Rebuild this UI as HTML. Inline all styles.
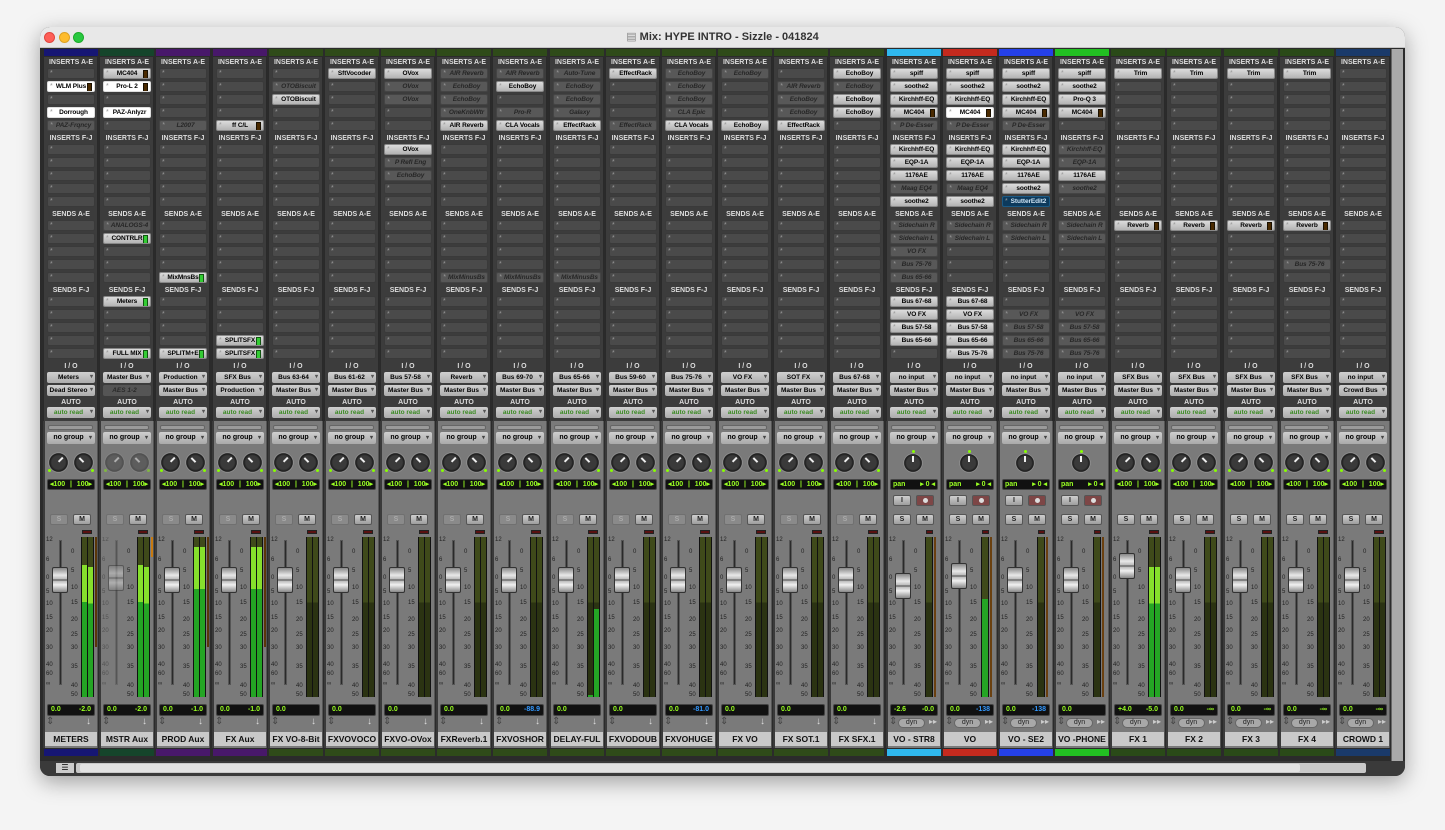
<!DOCTYPE html>
<html><head><meta charset="utf-8"><style>
*{box-sizing:border-box}
body{margin:0;width:1445px;height:830px;background:#f4f4f4;position:relative;overflow:hidden;font-family:"Liberation Sans",sans-serif}
.win{position:absolute;left:40px;top:27px;width:1365px;height:749px;border-radius:10px;background:#2b2b2b;box-shadow:0 6px 22px rgba(0,0,0,.35);overflow:hidden}
.tb{position:absolute;left:0;top:0;width:1365px;height:21px;background:#e8e8e8;border-bottom:1px solid #c4c4c4;text-align:center;font-size:11px;line-height:21px;color:#333;font-weight:bold}
.dot{position:absolute;top:5px;width:11px;height:11px;border-radius:50%}
.vs{position:absolute;left:1351px;top:22px;width:12px;height:712px;background:#a9a9a9;border-left:1px solid #666}
.hsb{position:absolute;left:0;top:734px;width:1365px;height:15px;background:#3a3a3a}
.hsb .t{position:absolute;left:36px;top:2px;width:1290px;height:10px;background:#c9c9c9;border-radius:2px}
.hsb .th{position:absolute;left:40px;top:3px;width:1220px;height:8px;background:#e2e2e2;border-radius:2px}
.s{position:absolute;top:0;width:55px;height:830px}
.up{position:absolute;left:0;top:57px;width:55px;height:364px;background:#3c3c3c;border-left:1px solid #2a2a2a;border-right:1px solid #2a2a2a}
.lo{position:absolute;left:0;top:421px;width:55px;height:327px;background:#7a7a7a;border-left:2px solid #3a3a3a;border-right:1px solid #555}
.cb{position:absolute;left:1px;top:49px;width:54px;height:7px}
.cb2{position:absolute;left:1px;top:749px;width:54px;height:7px}
.sec{position:absolute;left:4px;width:48px}
.h{height:11px;font-size:7px;font-weight:bold;color:#ddd;text-align:center;line-height:11px;white-space:nowrap;overflow:hidden}
.sec p{margin:0 0 2px 0;height:11px;background:#4a4a4a;border:1px solid #3a3a3a;border-radius:2px;position:relative;font-size:6.5px;font-weight:bold;line-height:9px;text-align:center;color:#000;padding-left:5px;white-space:nowrap;overflow:hidden;letter-spacing:-0.1px}
.sec p:before{content:"*";position:absolute;left:2px;top:0;color:#999;font-size:7px;font-weight:normal}
.sec p.a{background:linear-gradient(#dcdcdc,#b4b4b4);border-color:#888}
.sec p.i{background:#585858;color:#262626;font-style:italic;border-color:#444}
.sec p.w{background:#fff;border-color:#ddd}
.sec p.b{background:#0d3a5c;color:#cfe4f4;border-color:#1b5a85}
.sec p.m,.sec p.g{padding-right:5px}
.sec p.m:after{content:"";position:absolute;right:2px;top:1px;width:3px;height:7px;background:#4a2a00;border:1px solid #1a1000}
.sec p.g:after{content:"";position:absolute;right:2px;top:1px;width:3px;height:7px;background:#3c3;border:1px solid #151}
.io{position:absolute;left:4px;width:48px;height:11px;background:linear-gradient(#d0d0d0,#acacac);border-radius:2px;font-size:6.5px;font-weight:bold;text-align:center;line-height:11px;padding-right:5px;white-space:nowrap;overflow:hidden}
.io:after{content:"▾";position:absolute;right:2px;top:0;font-size:6px;color:#555}
.io.d{background:#555;color:#2a2a2a;font-style:italic}
.ar{color:#3a8a22}
.gb{position:absolute;left:5px;top:425px;width:45px;height:5px;background:#9a9a9a;border:1px solid #666;border-radius:2px}
.ng{position:absolute;left:4px;top:432px;width:48px;height:12px;background:linear-gradient(#cfcfcf,#a9a9a9);border-radius:2px;font-size:7px;font-weight:bold;text-align:center;line-height:12px;padding-right:5px}
.ng:after{content:"▾";position:absolute;right:3px;font-size:6px;color:#444}
.kn{position:absolute;top:452px;width:21px;height:21px;border-radius:50%;background:radial-gradient(#3a3a3a 45%,#1a1a1a 60%,#999 66%,#444 78%);}
.kn:after{content:"";position:absolute;left:10px;top:5px;width:1.5px;height:6px;background:#eee;transform-origin:50% 100%}
.kl{left:5px}.kl:after{transform:rotate(-135deg) translateY(0px);top:10px;height:6px;transform-origin:50% 0}
.kr{left:30px}.kr:after{transform:rotate(135deg);top:10px;transform-origin:50% 0}
.kl:before,.kr:before{content:"";position:absolute;top:17px;width:3px;height:3px;background:#8f0;border-radius:50%}
.kl:before{left:0}.kr:before{right:0}
.dim{opacity:.45}
.km{left:17px;top:453px;width:20px;height:20px}
.km:after{transform:none;top:3px;left:9px}
.km:before{content:"";position:absolute;left:8.5px;top:-3px;width:3px;height:3px;background:#8f0;border-radius:50%}
.pv{position:absolute;left:4px;top:479px;width:48px;height:11px;background:#111;border:1px solid #444;border-radius:2px;color:#9f2;font-size:7px;font-weight:bold;line-height:9px;display:flex;justify-content:space-between;padding:0 2px}
.bt{position:absolute;width:18px;height:11px;background:linear-gradient(#cfcfcf,#9e9e9e);border:1px solid #555;border-radius:2px;font-size:7px;font-weight:bold;text-align:center;line-height:9px;color:#222}
.S{left:7px;top:514px}.M{left:30px;top:514px}
.bs{background:#8a8a8a;color:#aaa;border-color:#707070}
.I{left:7px;top:495px}.R{left:30px;top:495px;background:#7d4646}
.R:after{content:"";position:absolute;left:6px;top:2px;width:5px;height:5px;border-radius:50%;background:#ddd}
.sl,.sr{position:absolute;top:0;font-size:6px;color:#222}
.sl{left:3px}.sr{left:28px}
.sl i,.sr i{position:absolute;font-style:normal;line-height:6px}
.sl i:nth-child(1){top:537px}.sl i:nth-child(2){top:557px}.sl i:nth-child(3){top:575px}.sl i:nth-child(4){top:589px}.sl i:nth-child(5){top:601px}.sl i:nth-child(6){top:615px}.sl i:nth-child(7){top:628px}.sl i:nth-child(8){top:645px}.sl i:nth-child(9){top:662px}.sl i:nth-child(10){top:671px}.sl i:nth-child(11){top:681px}
.sr i:nth-child(1){top:545px}.sr i:nth-child(2){top:549px}.sr i:nth-child(3){top:568px}.sr i:nth-child(4){top:585px}.sr i:nth-child(5){top:600px}.sr i:nth-child(6){top:617px}.sr i:nth-child(7){top:632px}.sr i:nth-child(8){top:645px}.sr i:nth-child(9){top:664px}.sr i:nth-child(10){top:683px}.sr i:nth-child(11){top:692px}
.sr i:nth-child(1){display:none}
.tr{position:absolute;left:16px;top:540px;width:3px;height:145px;background:#2a2a2a;border:1px solid #555}
.cap{position:absolute;left:9px;width:16px;height:26px;border-radius:2px;background:linear-gradient(#888,#e8e8e8 30%,#bbb 46%,#444 50%,#bbb 54%,#f0f0f0 70%,#888);border:1px solid #333}
.mt{position:absolute;left:38px;top:537px;width:13px;height:160px;background:#111;display:flex;gap:1px;padding:0 1px}
.mt.mo{left:39px;width:8px}
.mt b{flex:1;position:relative;background:linear-gradient(#3f4a1a 0,#3f4a1a 41%,#2b3312 41%)}
.mt b i{position:absolute;left:0;right:0;bottom:0;background:linear-gradient(#86e02c 0,#86e02c 28%,#24a524 28%)}
.mt b i.dk{background:#24a524}
.pk{position:absolute;left:52px;top:537px;width:2px;height:110px;background:#5a3608}
.cl{position:absolute;left:39px;top:530px;width:10px;height:4px;background:#5a1111;border:1px solid #222}
.vd{position:absolute;left:4px;top:704px;width:48px;height:12px;background:#111;border:1px solid #444;border-radius:2px;color:#9f2;font-size:7px;font-weight:bold;line-height:10px;display:flex;justify-content:space-between;padding:0 3px}
.vd .bl{color:#39f}
.ic{position:absolute;left:3px;top:716px;font-size:10px;color:#444}
.dn{position:absolute;left:43px;top:716px;font-size:10px;color:#ddd}
.dy{position:absolute;left:12px;top:718px;width:27px;height:10px;background:#a8a8a8;border:1px solid #666;border-radius:5px;font-size:7px;text-align:center;line-height:8px;color:#222}
.ff{position:absolute;left:43px;top:717px;font-size:8px;color:#ccc}
.nm{position:absolute;left:2px;top:732px;width:52px;height:14px;background:#c9c9c9;font-size:8.5px;font-weight:bold;text-align:center;line-height:14px;white-space:nowrap;overflow:hidden;color:#111}
</style></head><body>
<div class="win">
<div class="tb"><span style="color:#888;font-weight:normal">&#9636; </span>Mix: HYPE INTRO - Sizzle - 041824</div>
<div class="dot" style="left:4px;background:#fe5f57;border:1px solid #e0443e"></div>
<div class="dot" style="left:19px;background:#febc2e;border:1px solid #dea123"></div>
<div class="dot" style="left:33px;background:#28c840;border:1px solid #1aab29"></div>
<div class="vs"></div>
<div class="hsb"><div class="t"></div><div class="th"></div><div style="position:absolute;left:16px;top:2px;width:18px;height:10px;background:#ccc;font-size:8px;line-height:10px;text-align:center">&#9776;</div></div>
</div>

<!-- 0 METERS -->
<div class="s" style="left:43px"><div class="up"></div><div class="cb" style="background:#161674"></div>
<div class="sec" style="top:57px"><div class="h">INSERTS A-E</div><p></p><p class="w m">WLM Plus</p><p></p><p class="w">Dorrough</p><p class="i">PAZ-Frqncy</p></div>
<div class="sec" style="top:133px"><div class="h">INSERTS F-J</div><p></p><p></p><p></p><p></p><p></p></div>
<div class="sec" style="top:209px"><div class="h">SENDS A-E</div><p></p><p></p><p></p><p></p><p></p></div>
<div class="sec" style="top:285px"><div class="h">SENDS F-J</div><p></p><p></p><p></p><p></p><p></p></div>
<div class="sec" style="top:361px"><div class="h">I / O</div></div><div class="io" style="top:372px">Meters</div><div class="io" style="top:385px">Dead Stereo</div>
<div class="sec" style="top:397px"><div class="h">AUTO</div></div><div class="io ar" style="top:407px">auto read</div>
<div class="lo"></div><div class="gb"></div><div class="ng">no group</div><div class="kn kl"></div><div class="kn kr"></div>
<div class="pv"><span>◂100</span><span>|</span><span>100▸</span></div><div class="bt S bs">S</div><div class="bt M">M</div>
<div class="sl"><i>12</i><i>6</i><i>0</i><i>5</i><i>10</i><i>15</i><i>20</i><i>30</i><i>40</i><i>60</i><i>∞</i></div><div class="sr"><i>0</i><i>0</i><i>5</i><i>10</i><i>15</i><i>20</i><i>25</i><i>30</i><i>35</i><i>40</i><i>50</i></div>
<div class="tr"></div><div class="cap" style="top:567px"></div><div class="cl"></div><div class="mt"><b><i style="height:132px"></i></b><b><i style="height:130px"></i></b></div><div class="pk"></div>
<div class="vd"><span>0.0</span><span>-2.0</span></div><div class="ic">⇕</div><div class="dn">↓</div><div class="nm">METERS</div><div class="cb2" style="background:#161674"></div></div>

<!-- 1 MSTR Aux -->
<div class="s" style="left:99px"><div class="up"></div><div class="cb" style="background:#15452b"></div>
<div class="sec" style="top:57px"><div class="h">INSERTS A-E</div><p class="a m">MC404</p><p class="w m">Pro-L 2</p><p></p><p class="w">PAZ-Anlyzr</p><p></p></div>
<div class="sec" style="top:133px"><div class="h">INSERTS F-J</div><p></p><p></p><p></p><p></p><p></p></div>
<div class="sec" style="top:209px"><div class="h">SENDS A-E</div><p class="i">ANALOGS-4</p><p class="a g">CONTRLR</p><p></p><p></p><p></p></div>
<div class="sec" style="top:285px"><div class="h">SENDS F-J</div><p class="a g">Meters</p><p></p><p></p><p></p><p class="a g">FULL MIX</p></div>
<div class="sec" style="top:361px"><div class="h">I / O</div></div><div class="io" style="top:372px">Master Bus</div><div class="io d" style="top:385px">AES 1-2</div>
<div class="sec" style="top:397px"><div class="h">AUTO</div></div><div class="io ar" style="top:407px">auto read</div>
<div class="lo"></div><div class="gb"></div><div class="ng">no group</div><div class="kn kl dim"></div><div class="kn kr dim"></div>
<div class="pv"><span>◂100</span><span>|</span><span>100▸</span></div><div class="bt S bs">S</div><div class="bt M">M</div>
<div class="sl dim"><i>12</i><i>6</i><i>0</i><i>5</i><i>10</i><i>15</i><i>20</i><i>30</i><i>40</i><i>60</i><i>∞</i></div><div class="sr"><i>0</i><i>0</i><i>5</i><i>10</i><i>15</i><i>20</i><i>25</i><i>30</i><i>35</i><i>40</i><i>50</i></div>
<div class="tr dim"></div><div class="cap dim" style="top:565px"></div><div class="cl"></div><div class="mt"><b><i style="height:132px"></i></b><b><i style="height:130px"></i></b></div><div class="pk" style="background:#c77a10;height:20px"></div>
<div class="vd"><span>0.0</span><span>-2.0</span></div><div class="ic">⇕</div><div class="dn">↓</div><div class="nm">MSTR Aux</div><div class="cb2" style="background:#15452b"></div></div>

<!-- 2 PROD Aux -->
<div class="s" style="left:155px"><div class="up"></div><div class="cb" style="background:#48186a"></div>
<div class="sec" style="top:57px"><div class="h">INSERTS A-E</div><p></p><p></p><p></p><p></p><p class="i">L2007</p></div>
<div class="sec" style="top:133px"><div class="h">INSERTS F-J</div><p></p><p></p><p></p><p></p><p></p></div>
<div class="sec" style="top:209px"><div class="h">SENDS A-E</div><p></p><p></p><p></p><p></p><p class="a g">MixMnsBs</p></div>
<div class="sec" style="top:285px"><div class="h">SENDS F-J</div><p></p><p></p><p></p><p></p><p class="a g">SPLITM+E</p></div>
<div class="sec" style="top:361px"><div class="h">I / O</div></div><div class="io" style="top:372px">Production</div><div class="io" style="top:385px">Master Bus</div>
<div class="sec" style="top:397px"><div class="h">AUTO</div></div><div class="io ar" style="top:407px">auto read</div>
<div class="lo"></div><div class="gb"></div><div class="ng">no group</div><div class="kn kl"></div><div class="kn kr"></div>
<div class="pv"><span>◂100</span><span>|</span><span>100▸</span></div><div class="bt S bs">S</div><div class="bt M">M</div>
<div class="sl"><i>12</i><i>6</i><i>0</i><i>5</i><i>10</i><i>15</i><i>20</i><i>30</i><i>40</i><i>60</i><i>∞</i></div><div class="sr"><i>0</i><i>0</i><i>5</i><i>10</i><i>15</i><i>20</i><i>25</i><i>30</i><i>35</i><i>40</i><i>50</i></div>
<div class="tr"></div><div class="cap" style="top:567px"></div><div class="cl"></div><div class="mt"><b><i style="height:150px"></i></b><b><i style="height:150px"></i></b></div><div class="pk"></div>
<div class="vd"><span>0.0</span><span>-1.0</span></div><div class="ic">⇕</div><div class="dn">↓</div><div class="nm">PROD Aux</div><div class="cb2" style="background:#48186a"></div></div>

<!-- 3 FX Aux -->
<div class="s" style="left:212px"><div class="up"></div><div class="cb" style="background:#48186a"></div>
<div class="sec" style="top:57px"><div class="h">INSERTS A-E</div><p></p><p></p><p></p><p></p><p class="a m">ff C/L</p></div>
<div class="sec" style="top:133px"><div class="h">INSERTS F-J</div><p></p><p></p><p></p><p></p><p></p></div>
<div class="sec" style="top:209px"><div class="h">SENDS A-E</div><p></p><p></p><p></p><p></p><p></p></div>
<div class="sec" style="top:285px"><div class="h">SENDS F-J</div><p></p><p></p><p></p><p class="a g">SPLITSFX</p><p class="a g">SPLITSFX</p></div>
<div class="sec" style="top:361px"><div class="h">I / O</div></div><div class="io" style="top:372px">SFX Bus</div><div class="io" style="top:385px">Production</div>
<div class="sec" style="top:397px"><div class="h">AUTO</div></div><div class="io ar" style="top:407px">auto read</div>
<div class="lo"></div><div class="gb"></div><div class="ng">no group</div><div class="kn kl"></div><div class="kn kr"></div>
<div class="pv"><span>◂100</span><span>|</span><span>100▸</span></div><div class="bt S bs">S</div><div class="bt M">M</div>
<div class="sl"><i>12</i><i>6</i><i>0</i><i>5</i><i>10</i><i>15</i><i>20</i><i>30</i><i>40</i><i>60</i><i>∞</i></div><div class="sr"><i>0</i><i>0</i><i>5</i><i>10</i><i>15</i><i>20</i><i>25</i><i>30</i><i>35</i><i>40</i><i>50</i></div>
<div class="tr"></div><div class="cap" style="top:567px"></div><div class="cl"></div><div class="mt"><b><i style="height:150px"></i></b><b><i style="height:150px"></i></b></div><div class="pk"></div>
<div class="vd"><span>0.0</span><span>-1.0</span></div><div class="ic">⇕</div><div class="dn">↓</div><div class="nm">FX Aux</div><div class="cb2" style="background:#48186a"></div></div>

<!-- 4 FX VO-8-Bit -->
<div class="s" style="left:268px"><div class="up"></div><div class="cb" style="background:#2f4b19"></div>
<div class="sec" style="top:57px"><div class="h">INSERTS A-E</div><p></p><p class="i">OTOBiscuit</p><p class="a">OTOBiscuit</p><p></p><p></p></div>
<div class="sec" style="top:133px"><div class="h">INSERTS F-J</div><p></p><p></p><p></p><p></p><p></p></div>
<div class="sec" style="top:209px"><div class="h">SENDS A-E</div><p></p><p></p><p></p><p></p><p></p></div>
<div class="sec" style="top:285px"><div class="h">SENDS F-J</div><p></p><p></p><p></p><p></p><p></p></div>
<div class="sec" style="top:361px"><div class="h">I / O</div></div><div class="io" style="top:372px">Bus 63-64</div><div class="io" style="top:385px">Master Bus</div>
<div class="sec" style="top:397px"><div class="h">AUTO</div></div><div class="io ar" style="top:407px">auto read</div>
<div class="lo"></div><div class="gb"></div><div class="ng">no group</div><div class="kn kl"></div><div class="kn kr"></div>
<div class="pv"><span>◂100</span><span>|</span><span>100▸</span></div><div class="bt S bs">S</div><div class="bt M">M</div>
<div class="sl"><i>12</i><i>6</i><i>0</i><i>5</i><i>10</i><i>15</i><i>20</i><i>30</i><i>40</i><i>60</i><i>∞</i></div><div class="sr"><i>0</i><i>0</i><i>5</i><i>10</i><i>15</i><i>20</i><i>25</i><i>30</i><i>35</i><i>40</i><i>50</i></div>
<div class="tr"></div><div class="cap" style="top:567px"></div><div class="cl"></div><div class="mt"><b></b><b></b></div>
<div class="vd"><span>0.0</span><span></span></div><div class="ic">⇕</div><div class="dn">↓</div><div class="nm">FX VO-8-Bit</div><div class="cb2" style="background:#2f4b19"></div></div>

<!-- 5 FXVOVOCO -->
<div class="s" style="left:324px"><div class="up"></div><div class="cb" style="background:#2f4b19"></div>
<div class="sec" style="top:57px"><div class="h">INSERTS A-E</div><p class="a">SftVocoder</p><p></p><p></p><p></p><p></p></div>
<div class="sec" style="top:133px"><div class="h">INSERTS F-J</div><p></p><p></p><p></p><p></p><p></p></div>
<div class="sec" style="top:209px"><div class="h">SENDS A-E</div><p></p><p></p><p></p><p></p><p></p></div>
<div class="sec" style="top:285px"><div class="h">SENDS F-J</div><p></p><p></p><p></p><p></p><p></p></div>
<div class="sec" style="top:361px"><div class="h">I / O</div></div><div class="io" style="top:372px">Bus 61-62</div><div class="io" style="top:385px">Master Bus</div>
<div class="sec" style="top:397px"><div class="h">AUTO</div></div><div class="io ar" style="top:407px">auto read</div>
<div class="lo"></div><div class="gb"></div><div class="ng">no group</div><div class="kn kl"></div><div class="kn kr"></div>
<div class="pv"><span>◂100</span><span>|</span><span>100▸</span></div><div class="bt S bs">S</div><div class="bt M">M</div>
<div class="sl"><i>12</i><i>6</i><i>0</i><i>5</i><i>10</i><i>15</i><i>20</i><i>30</i><i>40</i><i>60</i><i>∞</i></div><div class="sr"><i>0</i><i>0</i><i>5</i><i>10</i><i>15</i><i>20</i><i>25</i><i>30</i><i>35</i><i>40</i><i>50</i></div>
<div class="tr"></div><div class="cap" style="top:567px"></div><div class="cl"></div><div class="mt"><b></b><b></b></div>
<div class="vd"><span>0.0</span><span></span></div><div class="ic">⇕</div><div class="dn">↓</div><div class="nm">FXVOVOCO</div><div class="cb2" style="background:#2f4b19"></div></div>

<!-- 6 FXVO-OVox -->
<div class="s" style="left:380px"><div class="up"></div><div class="cb" style="background:#2f4b19"></div>
<div class="sec" style="top:57px"><div class="h">INSERTS A-E</div><p class="a">OVox</p><p class="i">OVox</p><p class="i">OVox</p><p></p><p></p></div>
<div class="sec" style="top:133px"><div class="h">INSERTS F-J</div><p class="a">OVox</p><p class="i">P Refl Eng</p><p class="i">EchoBoy</p><p></p><p></p></div>
<div class="sec" style="top:209px"><div class="h">SENDS A-E</div><p></p><p></p><p></p><p></p><p></p></div>
<div class="sec" style="top:285px"><div class="h">SENDS F-J</div><p></p><p></p><p></p><p></p><p></p></div>
<div class="sec" style="top:361px"><div class="h">I / O</div></div><div class="io" style="top:372px">Bus 57-58</div><div class="io" style="top:385px">Master Bus</div>
<div class="sec" style="top:397px"><div class="h">AUTO</div></div><div class="io ar" style="top:407px">auto read</div>
<div class="lo"></div><div class="gb"></div><div class="ng">no group</div><div class="kn kl"></div><div class="kn kr"></div>
<div class="pv"><span>◂100</span><span>|</span><span>100▸</span></div><div class="bt S bs">S</div><div class="bt M">M</div>
<div class="sl"><i>12</i><i>6</i><i>0</i><i>5</i><i>10</i><i>15</i><i>20</i><i>30</i><i>40</i><i>60</i><i>∞</i></div><div class="sr"><i>0</i><i>0</i><i>5</i><i>10</i><i>15</i><i>20</i><i>25</i><i>30</i><i>35</i><i>40</i><i>50</i></div>
<div class="tr"></div><div class="cap" style="top:567px"></div><div class="cl"></div><div class="mt"><b></b><b></b></div>
<div class="vd"><span>0.0</span><span></span></div><div class="ic">⇕</div><div class="dn">↓</div><div class="nm">FXVO-OVox</div><div class="cb2" style="background:#2f4b19"></div></div>

<!-- 7 FXReverb.1 -->
<div class="s" style="left:436px"><div class="up"></div><div class="cb" style="background:#2f4b19"></div>
<div class="sec" style="top:57px"><div class="h">INSERTS A-E</div><p class="i">AIR Reverb</p><p class="i">EchoBoy</p><p class="i">EchoBoy</p><p class="i">OneKnbWtr</p><p class="a">AIR Reverb</p></div>
<div class="sec" style="top:133px"><div class="h">INSERTS F-J</div><p></p><p></p><p></p><p></p><p></p></div>
<div class="sec" style="top:209px"><div class="h">SENDS A-E</div><p></p><p></p><p></p><p></p><p class="i">MixMinusBs</p></div>
<div class="sec" style="top:285px"><div class="h">SENDS F-J</div><p></p><p></p><p></p><p></p><p></p></div>
<div class="sec" style="top:361px"><div class="h">I / O</div></div><div class="io" style="top:372px">Reverb</div><div class="io" style="top:385px">Master Bus</div>
<div class="sec" style="top:397px"><div class="h">AUTO</div></div><div class="io ar" style="top:407px">auto read</div>
<div class="lo"></div><div class="gb"></div><div class="ng">no group</div><div class="kn kl"></div><div class="kn kr"></div>
<div class="pv"><span>◂100</span><span>|</span><span>100▸</span></div><div class="bt S bs">S</div><div class="bt M">M</div>
<div class="sl"><i>12</i><i>6</i><i>0</i><i>5</i><i>10</i><i>15</i><i>20</i><i>30</i><i>40</i><i>60</i><i>∞</i></div><div class="sr"><i>0</i><i>0</i><i>5</i><i>10</i><i>15</i><i>20</i><i>25</i><i>30</i><i>35</i><i>40</i><i>50</i></div>
<div class="tr"></div><div class="cap" style="top:567px"></div><div class="cl"></div><div class="mt"><b></b><b></b></div>
<div class="vd"><span>0.0</span><span></span></div><div class="ic">⇕</div><div class="dn">↓</div><div class="nm">FXReverb.1</div><div class="cb2" style="background:#2f4b19"></div></div>

<!-- 8 FXVOSHOR -->
<div class="s" style="left:492px"><div class="up"></div><div class="cb" style="background:#2f4b19"></div>
<div class="sec" style="top:57px"><div class="h">INSERTS A-E</div><p class="i">AIR Reverb</p><p class="a">EchoBoy</p><p></p><p class="i">Pro-R</p><p class="a">CLA Vocals</p></div>
<div class="sec" style="top:133px"><div class="h">INSERTS F-J</div><p></p><p></p><p></p><p></p><p></p></div>
<div class="sec" style="top:209px"><div class="h">SENDS A-E</div><p></p><p></p><p></p><p></p><p class="i">MixMinusBs</p></div>
<div class="sec" style="top:285px"><div class="h">SENDS F-J</div><p></p><p></p><p></p><p></p><p></p></div>
<div class="sec" style="top:361px"><div class="h">I / O</div></div><div class="io" style="top:372px">Bus 69-70</div><div class="io" style="top:385px">Master Bus</div>
<div class="sec" style="top:397px"><div class="h">AUTO</div></div><div class="io ar" style="top:407px">auto read</div>
<div class="lo"></div><div class="gb"></div><div class="ng">no group</div><div class="kn kl"></div><div class="kn kr"></div>
<div class="pv"><span>◂100</span><span>|</span><span>100▸</span></div><div class="bt S bs">S</div><div class="bt M">M</div>
<div class="sl"><i>12</i><i>6</i><i>0</i><i>5</i><i>10</i><i>15</i><i>20</i><i>30</i><i>40</i><i>60</i><i>∞</i></div><div class="sr"><i>0</i><i>0</i><i>5</i><i>10</i><i>15</i><i>20</i><i>25</i><i>30</i><i>35</i><i>40</i><i>50</i></div>
<div class="tr"></div><div class="cap" style="top:567px"></div><div class="cl"></div><div class="mt"><b></b><b></b></div>
<div class="vd"><span>0.0</span><span class="bl">-88.9</span></div><div class="ic">⇕</div><div class="dn">↓</div><div class="nm">FXVOSHOR</div><div class="cb2" style="background:#2f4b19"></div></div>

<!-- 9 DELAY-FUL -->
<div class="s" style="left:549px"><div class="up"></div><div class="cb" style="background:#2f4b19"></div>
<div class="sec" style="top:57px"><div class="h">INSERTS A-E</div><p class="i">Auto-Tune</p><p class="i">EchoBoy</p><p class="i">EchoBoy</p><p class="i">Galaxy</p><p class="a">EffectRack</p></div>
<div class="sec" style="top:133px"><div class="h">INSERTS F-J</div><p></p><p></p><p></p><p></p><p></p></div>
<div class="sec" style="top:209px"><div class="h">SENDS A-E</div><p></p><p></p><p></p><p></p><p class="i">MixMinusBs</p></div>
<div class="sec" style="top:285px"><div class="h">SENDS F-J</div><p></p><p></p><p></p><p></p><p></p></div>
<div class="sec" style="top:361px"><div class="h">I / O</div></div><div class="io" style="top:372px">Bus 65-66</div><div class="io" style="top:385px">Master Bus</div>
<div class="sec" style="top:397px"><div class="h">AUTO</div></div><div class="io ar" style="top:407px">auto read</div>
<div class="lo"></div><div class="gb"></div><div class="ng">no group</div><div class="kn kl"></div><div class="kn kr"></div>
<div class="pv"><span>◂100</span><span>|</span><span>100▸</span></div><div class="bt S bs">S</div><div class="bt M">M</div>
<div class="sl"><i>12</i><i>6</i><i>0</i><i>5</i><i>10</i><i>15</i><i>20</i><i>30</i><i>40</i><i>60</i><i>∞</i></div><div class="sr"><i>0</i><i>0</i><i>5</i><i>10</i><i>15</i><i>20</i><i>25</i><i>30</i><i>35</i><i>40</i><i>50</i></div>
<div class="tr"></div><div class="cap" style="top:567px"></div><div class="cl"></div><div class="mt"><b><i class="dk" style="height:2px"></i></b><b><i class="dk" style="height:88px"></i></b></div>
<div class="vd"><span>0.0</span><span></span></div><div class="ic">⇕</div><div class="dn">↓</div><div class="nm">DELAY-FUL</div><div class="cb2" style="background:#2f4b19"></div></div>

<!-- 10 FXVODOUB -->
<div class="s" style="left:605px"><div class="up"></div><div class="cb" style="background:#2f4b19"></div>
<div class="sec" style="top:57px"><div class="h">INSERTS A-E</div><p class="a">EffectRack</p><p></p><p></p><p></p><p class="i">EffectRack</p></div>
<div class="sec" style="top:133px"><div class="h">INSERTS F-J</div><p></p><p></p><p></p><p></p><p></p></div>
<div class="sec" style="top:209px"><div class="h">SENDS A-E</div><p></p><p></p><p></p><p></p><p></p></div>
<div class="sec" style="top:285px"><div class="h">SENDS F-J</div><p></p><p></p><p></p><p></p><p></p></div>
<div class="sec" style="top:361px"><div class="h">I / O</div></div><div class="io" style="top:372px">Bus 59-60</div><div class="io" style="top:385px">Master Bus</div>
<div class="sec" style="top:397px"><div class="h">AUTO</div></div><div class="io ar" style="top:407px">auto read</div>
<div class="lo"></div><div class="gb"></div><div class="ng">no group</div><div class="kn kl"></div><div class="kn kr"></div>
<div class="pv"><span>◂100</span><span>|</span><span>100▸</span></div><div class="bt S bs">S</div><div class="bt M">M</div>
<div class="sl"><i>12</i><i>6</i><i>0</i><i>5</i><i>10</i><i>15</i><i>20</i><i>30</i><i>40</i><i>60</i><i>∞</i></div><div class="sr"><i>0</i><i>0</i><i>5</i><i>10</i><i>15</i><i>20</i><i>25</i><i>30</i><i>35</i><i>40</i><i>50</i></div>
<div class="tr"></div><div class="cap" style="top:567px"></div><div class="cl"></div><div class="mt"><b></b><b></b></div>
<div class="vd"><span>0.0</span><span></span></div><div class="ic">⇕</div><div class="dn">↓</div><div class="nm">FXVODOUB</div><div class="cb2" style="background:#2f4b19"></div></div>

<!-- 11 FXVOHUGE -->
<div class="s" style="left:661px"><div class="up"></div><div class="cb" style="background:#2f4b19"></div>
<div class="sec" style="top:57px"><div class="h">INSERTS A-E</div><p class="i">EchoBoy</p><p class="i">EchoBoy</p><p class="i">EchoBoy</p><p class="i">CLA Epic</p><p class="a">CLA Vocals</p></div>
<div class="sec" style="top:133px"><div class="h">INSERTS F-J</div><p></p><p></p><p></p><p></p><p></p></div>
<div class="sec" style="top:209px"><div class="h">SENDS A-E</div><p></p><p></p><p></p><p></p><p></p></div>
<div class="sec" style="top:285px"><div class="h">SENDS F-J</div><p></p><p></p><p></p><p></p><p></p></div>
<div class="sec" style="top:361px"><div class="h">I / O</div></div><div class="io" style="top:372px">Bus 75-76</div><div class="io" style="top:385px">Master Bus</div>
<div class="sec" style="top:397px"><div class="h">AUTO</div></div><div class="io ar" style="top:407px">auto read</div>
<div class="lo"></div><div class="gb"></div><div class="ng">no group</div><div class="kn kl"></div><div class="kn kr"></div>
<div class="pv"><span>◂100</span><span>|</span><span>100▸</span></div><div class="bt S bs">S</div><div class="bt M">M</div>
<div class="sl"><i>12</i><i>6</i><i>0</i><i>5</i><i>10</i><i>15</i><i>20</i><i>30</i><i>40</i><i>60</i><i>∞</i></div><div class="sr"><i>0</i><i>0</i><i>5</i><i>10</i><i>15</i><i>20</i><i>25</i><i>30</i><i>35</i><i>40</i><i>50</i></div>
<div class="tr"></div><div class="cap" style="top:567px"></div><div class="cl"></div><div class="mt"><b></b><b></b></div>
<div class="vd"><span>0.0</span><span class="bl">-81.0</span></div><div class="ic">⇕</div><div class="dn">↓</div><div class="nm">FXVOHUGE</div><div class="cb2" style="background:#2f4b19"></div></div>

<!-- 12 FX VO -->
<div class="s" style="left:717px"><div class="up"></div><div class="cb" style="background:#2f4b19"></div>
<div class="sec" style="top:57px"><div class="h">INSERTS A-E</div><p class="i">EchoBoy</p><p></p><p></p><p></p><p class="a">EchoBoy</p></div>
<div class="sec" style="top:133px"><div class="h">INSERTS F-J</div><p></p><p></p><p></p><p></p><p></p></div>
<div class="sec" style="top:209px"><div class="h">SENDS A-E</div><p></p><p></p><p></p><p></p><p></p></div>
<div class="sec" style="top:285px"><div class="h">SENDS F-J</div><p></p><p></p><p></p><p></p><p></p></div>
<div class="sec" style="top:361px"><div class="h">I / O</div></div><div class="io" style="top:372px">VO FX</div><div class="io" style="top:385px">Master Bus</div>
<div class="sec" style="top:397px"><div class="h">AUTO</div></div><div class="io ar" style="top:407px">auto read</div>
<div class="lo"></div><div class="gb"></div><div class="ng">no group</div><div class="kn kl"></div><div class="kn kr"></div>
<div class="pv"><span>◂100</span><span>|</span><span>100▸</span></div><div class="bt S bs">S</div><div class="bt M">M</div>
<div class="sl"><i>12</i><i>6</i><i>0</i><i>5</i><i>10</i><i>15</i><i>20</i><i>30</i><i>40</i><i>60</i><i>∞</i></div><div class="sr"><i>0</i><i>0</i><i>5</i><i>10</i><i>15</i><i>20</i><i>25</i><i>30</i><i>35</i><i>40</i><i>50</i></div>
<div class="tr"></div><div class="cap" style="top:567px"></div><div class="cl"></div><div class="mt"><b></b><b></b></div>
<div class="vd"><span>0.0</span><span></span></div><div class="ic">⇕</div><div class="dn">↓</div><div class="nm">FX VO</div><div class="cb2" style="background:#2f4b19"></div></div>

<!-- 13 FX SOT.1 -->
<div class="s" style="left:773px"><div class="up"></div><div class="cb" style="background:#2f4b19"></div>
<div class="sec" style="top:57px"><div class="h">INSERTS A-E</div><p></p><p class="i">AIR Reverb</p><p class="i">EchoBoy</p><p class="i">EchoBoy</p><p class="a">EffectRack</p></div>
<div class="sec" style="top:133px"><div class="h">INSERTS F-J</div><p></p><p></p><p></p><p></p><p></p></div>
<div class="sec" style="top:209px"><div class="h">SENDS A-E</div><p></p><p></p><p></p><p></p><p></p></div>
<div class="sec" style="top:285px"><div class="h">SENDS F-J</div><p></p><p></p><p></p><p></p><p></p></div>
<div class="sec" style="top:361px"><div class="h">I / O</div></div><div class="io" style="top:372px">SOT FX</div><div class="io" style="top:385px">Master Bus</div>
<div class="sec" style="top:397px"><div class="h">AUTO</div></div><div class="io ar" style="top:407px">auto read</div>
<div class="lo"></div><div class="gb"></div><div class="ng">no group</div><div class="kn kl"></div><div class="kn kr"></div>
<div class="pv"><span>◂100</span><span>|</span><span>100▸</span></div><div class="bt S bs">S</div><div class="bt M">M</div>
<div class="sl"><i>12</i><i>6</i><i>0</i><i>5</i><i>10</i><i>15</i><i>20</i><i>30</i><i>40</i><i>60</i><i>∞</i></div><div class="sr"><i>0</i><i>0</i><i>5</i><i>10</i><i>15</i><i>20</i><i>25</i><i>30</i><i>35</i><i>40</i><i>50</i></div>
<div class="tr"></div><div class="cap" style="top:567px"></div><div class="cl"></div><div class="mt"><b></b><b></b></div>
<div class="vd"><span>0.0</span><span></span></div><div class="ic">⇕</div><div class="dn">↓</div><div class="nm">FX SOT.1</div><div class="cb2" style="background:#2f4b19"></div></div>

<!-- 14 FX SFX.1 -->
<div class="s" style="left:829px"><div class="up"></div><div class="cb" style="background:#2f4b19"></div>
<div class="sec" style="top:57px"><div class="h">INSERTS A-E</div><p class="a">EchoBoy</p><p class="i">EchoBoy</p><p class="a">EchoBoy</p><p class="a">EchoBoy</p><p></p></div>
<div class="sec" style="top:133px"><div class="h">INSERTS F-J</div><p></p><p></p><p></p><p></p><p></p></div>
<div class="sec" style="top:209px"><div class="h">SENDS A-E</div><p></p><p></p><p></p><p></p><p></p></div>
<div class="sec" style="top:285px"><div class="h">SENDS F-J</div><p></p><p></p><p></p><p></p><p></p></div>
<div class="sec" style="top:361px"><div class="h">I / O</div></div><div class="io" style="top:372px">Bus 67-68</div><div class="io" style="top:385px">Master Bus</div>
<div class="sec" style="top:397px"><div class="h">AUTO</div></div><div class="io ar" style="top:407px">auto read</div>
<div class="lo"></div><div class="gb"></div><div class="ng">no group</div><div class="kn kl"></div><div class="kn kr"></div>
<div class="pv"><span>◂100</span><span>|</span><span>100▸</span></div><div class="bt S bs">S</div><div class="bt M">M</div>
<div class="sl"><i>12</i><i>6</i><i>0</i><i>5</i><i>10</i><i>15</i><i>20</i><i>30</i><i>40</i><i>60</i><i>∞</i></div><div class="sr"><i>0</i><i>0</i><i>5</i><i>10</i><i>15</i><i>20</i><i>25</i><i>30</i><i>35</i><i>40</i><i>50</i></div>
<div class="tr"></div><div class="cap" style="top:567px"></div><div class="cl"></div><div class="mt"><b></b><b></b></div>
<div class="vd"><span>0.0</span><span></span></div><div class="ic">⇕</div><div class="dn">↓</div><div class="nm">FX SFX.1</div><div class="cb2" style="background:#2f4b19"></div></div>

<!-- 15 VO - STR8 -->
<div class="s" style="left:886px"><div class="up"></div><div class="cb" style="background:#2fb8ee"></div>
<div class="sec" style="top:57px"><div class="h">INSERTS A-E</div><p class="a">spiff</p><p class="a">soothe2</p><p class="a">Kirchhff-EQ</p><p class="a m">MC404</p><p class="i">P De-Esser</p></div>
<div class="sec" style="top:133px"><div class="h">INSERTS F-J</div><p class="a">Kirchhff-EQ</p><p class="a">EQP-1A</p><p class="a">1176AE</p><p class="i">Maag EQ4</p><p class="a">soothe2</p></div>
<div class="sec" style="top:209px"><div class="h">SENDS A-E</div><p class="i">Sidechain R</p><p class="i">Sidechain L</p><p class="i">VO FX</p><p class="i">Bus 75-76</p><p class="i">Bus 65-66</p></div>
<div class="sec" style="top:285px"><div class="h">SENDS F-J</div><p class="a">Bus 67-68</p><p class="a">VO FX</p><p class="a">Bus 57-58</p><p class="a">Bus 65-66</p><p></p></div>
<div class="sec" style="top:361px"><div class="h">I / O</div></div><div class="io" style="top:372px">no input</div><div class="io" style="top:385px">Master Bus</div>
<div class="sec" style="top:397px"><div class="h">AUTO</div></div><div class="io ar" style="top:407px">auto read</div>
<div class="lo"></div><div class="gb"></div><div class="ng">no group</div><div class="kn km"></div>
<div class="pv"><span>pan</span><span>▸ 0 ◂</span></div><div class="bt I">I</div><div class="bt R"></div><div class="bt S">S</div><div class="bt M">M</div>
<div class="sl"><i>12</i><i>6</i><i>0</i><i>5</i><i>10</i><i>15</i><i>20</i><i>30</i><i>40</i><i>60</i><i>∞</i></div><div class="sr"><i>0</i><i>0</i><i>5</i><i>10</i><i>15</i><i>20</i><i>25</i><i>30</i><i>35</i><i>40</i><i>50</i></div>
<div class="tr"></div><div class="cap" style="top:573px"></div><div class="cl" style="left:40px;width:7px"></div><div class="mt mo"><b></b></div><div class="pk" style="left:48px;height:160px;background:#6a4010"></div>
<div class="vd"><span>-2.6</span><span>-0.0</span></div><div class="ic">⇕</div><div class="dy">dyn</div><div class="ff">▸▸</div><div class="nm">VO - STR8</div><div class="cb2" style="background:#2fb8ee"></div></div>

<!-- 16 VO -->
<div class="s" style="left:942px"><div class="up"></div><div class="cb" style="background:#c42a1e"></div>
<div class="sec" style="top:57px"><div class="h">INSERTS A-E</div><p class="a">spiff</p><p class="a">soothe2</p><p class="a">Kirchhff-EQ</p><p class="w m">MC404</p><p class="i">P De-Esser</p></div>
<div class="sec" style="top:133px"><div class="h">INSERTS F-J</div><p class="a">Kirchhff-EQ</p><p class="a">EQP-1A</p><p class="a">1176AE</p><p class="i">Maag EQ4</p><p class="a">soothe2</p></div>
<div class="sec" style="top:209px"><div class="h">SENDS A-E</div><p class="i">Sidechain R</p><p class="i">Sidechain L</p><p></p><p></p><p></p></div>
<div class="sec" style="top:285px"><div class="h">SENDS F-J</div><p class="a">Bus 67-68</p><p class="a">VO FX</p><p class="a">Bus 57-58</p><p class="a">Bus 65-66</p><p class="a">Bus 75-76</p></div>
<div class="sec" style="top:361px"><div class="h">I / O</div></div><div class="io" style="top:372px">no input</div><div class="io" style="top:385px">Master Bus</div>
<div class="sec" style="top:397px"><div class="h">AUTO</div></div><div class="io ar" style="top:407px">auto read</div>
<div class="lo"></div><div class="gb"></div><div class="ng">no group</div><div class="kn km"></div>
<div class="pv"><span>pan</span><span>▸ 0 ◂</span></div><div class="bt I">I</div><div class="bt R"></div><div class="bt S">S</div><div class="bt M">M</div>
<div class="sl"><i>12</i><i>6</i><i>0</i><i>5</i><i>10</i><i>15</i><i>20</i><i>30</i><i>40</i><i>60</i><i>∞</i></div><div class="sr"><i>0</i><i>0</i><i>5</i><i>10</i><i>15</i><i>20</i><i>25</i><i>30</i><i>35</i><i>40</i><i>50</i></div>
<div class="tr"></div><div class="cap" style="top:563px"></div><div class="cl" style="left:40px;width:7px"></div><div class="mt mo"><b><i class="dk" style="height:98px"></i></b></div><div class="pk" style="left:48px;height:160px;background:#6a4010"></div>
<div class="vd"><span>0.0</span><span class="bl">-138</span></div><div class="ic">⇕</div><div class="dy">dyn</div><div class="ff">▸▸</div><div class="nm">VO</div><div class="cb2" style="background:#c42a1e"></div></div>

<!-- 17 VO - SE2 -->
<div class="s" style="left:998px"><div class="up"></div><div class="cb" style="background:#2540e8"></div>
<div class="sec" style="top:57px"><div class="h">INSERTS A-E</div><p class="a">spiff</p><p class="a">soothe2</p><p class="a">Kirchhff-EQ</p><p class="a m">MC404</p><p class="i">P De-Esser</p></div>
<div class="sec" style="top:133px"><div class="h">INSERTS F-J</div><p class="a">Kirchhff-EQ</p><p class="a">EQP-1A</p><p class="a">1176AE</p><p class="a">soothe2</p><p class="b">StutterEdit2</p></div>
<div class="sec" style="top:209px"><div class="h">SENDS A-E</div><p class="i">Sidechain R</p><p class="i">Sidechain L</p><p></p><p></p><p></p></div>
<div class="sec" style="top:285px"><div class="h">SENDS F-J</div><p></p><p class="i">VO FX</p><p class="i">Bus 57-58</p><p class="i">Bus 65-66</p><p class="i">Bus 75-76</p></div>
<div class="sec" style="top:361px"><div class="h">I / O</div></div><div class="io" style="top:372px">no input</div><div class="io" style="top:385px">Master Bus</div>
<div class="sec" style="top:397px"><div class="h">AUTO</div></div><div class="io ar" style="top:407px">auto read</div>
<div class="lo"></div><div class="gb"></div><div class="ng">no group</div><div class="kn km"></div>
<div class="pv"><span>pan</span><span>▸ 0 ◂</span></div><div class="bt I">I</div><div class="bt R"></div><div class="bt S">S</div><div class="bt M">M</div>
<div class="sl"><i>12</i><i>6</i><i>0</i><i>5</i><i>10</i><i>15</i><i>20</i><i>30</i><i>40</i><i>60</i><i>∞</i></div><div class="sr"><i>0</i><i>0</i><i>5</i><i>10</i><i>15</i><i>20</i><i>25</i><i>30</i><i>35</i><i>40</i><i>50</i></div>
<div class="tr"></div><div class="cap" style="top:567px"></div><div class="cl" style="left:40px;width:7px"></div><div class="mt mo"><b></b></div><div class="pk" style="left:48px;height:160px;background:#6a4010"></div>
<div class="vd"><span>0.0</span><span class="bl">-138</span></div><div class="ic">⇕</div><div class="dy">dyn</div><div class="ff">▸▸</div><div class="nm">VO - SE2</div><div class="cb2" style="background:#2540e8"></div></div>

<!-- 18 VO -PHONE -->
<div class="s" style="left:1054px"><div class="up"></div><div class="cb" style="background:#22c022"></div>
<div class="sec" style="top:57px"><div class="h">INSERTS A-E</div><p class="a">spiff</p><p class="a">soothe2</p><p class="a">Pro-Q 3</p><p class="a m">MC404</p><p></p></div>
<div class="sec" style="top:133px"><div class="h">INSERTS F-J</div><p class="i">Kirchhff-EQ</p><p class="i">EQP-1A</p><p class="a">1176AE</p><p class="i">soothe2</p><p></p></div>
<div class="sec" style="top:209px"><div class="h">SENDS A-E</div><p class="i">Sidechain R</p><p class="i">Sidechain L</p><p></p><p></p><p></p></div>
<div class="sec" style="top:285px"><div class="h">SENDS F-J</div><p></p><p class="i">VO FX</p><p class="i">Bus 57-58</p><p class="i">Bus 65-66</p><p class="i">Bus 75-76</p></div>
<div class="sec" style="top:361px"><div class="h">I / O</div></div><div class="io" style="top:372px">no input</div><div class="io" style="top:385px">Master Bus</div>
<div class="sec" style="top:397px"><div class="h">AUTO</div></div><div class="io ar" style="top:407px">auto read</div>
<div class="lo"></div><div class="gb"></div><div class="ng">no group</div><div class="kn km"></div>
<div class="pv"><span>pan</span><span>▸ 0 ◂</span></div><div class="bt I">I</div><div class="bt R"></div><div class="bt S">S</div><div class="bt M">M</div>
<div class="sl"><i>12</i><i>6</i><i>0</i><i>5</i><i>10</i><i>15</i><i>20</i><i>30</i><i>40</i><i>60</i><i>∞</i></div><div class="sr"><i>0</i><i>0</i><i>5</i><i>10</i><i>15</i><i>20</i><i>25</i><i>30</i><i>35</i><i>40</i><i>50</i></div>
<div class="tr"></div><div class="cap" style="top:567px"></div><div class="cl" style="left:40px;width:7px"></div><div class="mt mo"><b></b></div><div class="pk" style="left:48px;height:160px;background:#6a4010"></div>
<div class="vd"><span>0.0</span><span></span></div><div class="ic">⇕</div><div class="dy">dyn</div><div class="ff">▸▸</div><div class="nm">VO -PHONE</div><div class="cb2" style="background:#22c022"></div></div>

<!-- 19 FX 1 -->
<div class="s" style="left:1110px"><div class="up"></div><div class="cb" style="background:#2a4a18"></div>
<div class="sec" style="top:57px"><div class="h">INSERTS A-E</div><p class="a">Trim</p><p></p><p></p><p></p><p></p></div>
<div class="sec" style="top:133px"><div class="h">INSERTS F-J</div><p></p><p></p><p></p><p></p><p></p></div>
<div class="sec" style="top:209px"><div class="h">SENDS A-E</div><p class="a m">Reverb</p><p></p><p></p><p></p><p></p></div>
<div class="sec" style="top:285px"><div class="h">SENDS F-J</div><p></p><p></p><p></p><p></p><p></p></div>
<div class="sec" style="top:361px"><div class="h">I / O</div></div><div class="io" style="top:372px">SFX Bus</div><div class="io" style="top:385px">Master Bus</div>
<div class="sec" style="top:397px"><div class="h">AUTO</div></div><div class="io ar" style="top:407px">auto read</div>
<div class="lo"></div><div class="gb"></div><div class="ng">no group</div><div class="kn kl"></div><div class="kn kr"></div>
<div class="pv"><span>◂100</span><span>|</span><span>100▸</span></div><div class="bt S">S</div><div class="bt M">M</div>
<div class="sl"><i>12</i><i>6</i><i>0</i><i>5</i><i>10</i><i>15</i><i>20</i><i>30</i><i>40</i><i>60</i><i>∞</i></div><div class="sr"><i>0</i><i>0</i><i>5</i><i>10</i><i>15</i><i>20</i><i>25</i><i>30</i><i>35</i><i>40</i><i>50</i></div>
<div class="tr"></div><div class="cap" style="top:553px"></div><div class="cl"></div><div class="mt"><b><i style="height:130px"></i></b><b><i style="height:130px"></i></b></div>
<div class="vd"><span>+4.0</span><span>-5.0</span></div><div class="ic">⇕</div><div class="dy">dyn</div><div class="ff">▸▸</div><div class="nm">FX 1</div><div class="cb2" style="background:#2a4a18"></div></div>

<!-- 20 FX 2 -->
<div class="s" style="left:1166px"><div class="up"></div><div class="cb" style="background:#2a4a18"></div>
<div class="sec" style="top:57px"><div class="h">INSERTS A-E</div><p class="a">Trim</p><p></p><p></p><p></p><p></p></div>
<div class="sec" style="top:133px"><div class="h">INSERTS F-J</div><p></p><p></p><p></p><p></p><p></p></div>
<div class="sec" style="top:209px"><div class="h">SENDS A-E</div><p class="a m">Reverb</p><p></p><p></p><p></p><p></p></div>
<div class="sec" style="top:285px"><div class="h">SENDS F-J</div><p></p><p></p><p></p><p></p><p></p></div>
<div class="sec" style="top:361px"><div class="h">I / O</div></div><div class="io" style="top:372px">SFX Bus</div><div class="io" style="top:385px">Master Bus</div>
<div class="sec" style="top:397px"><div class="h">AUTO</div></div><div class="io ar" style="top:407px">auto read</div>
<div class="lo"></div><div class="gb"></div><div class="ng">no group</div><div class="kn kl"></div><div class="kn kr"></div>
<div class="pv"><span>◂100</span><span>|</span><span>100▸</span></div><div class="bt S">S</div><div class="bt M">M</div>
<div class="sl"><i>12</i><i>6</i><i>0</i><i>5</i><i>10</i><i>15</i><i>20</i><i>30</i><i>40</i><i>60</i><i>∞</i></div><div class="sr"><i>0</i><i>0</i><i>5</i><i>10</i><i>15</i><i>20</i><i>25</i><i>30</i><i>35</i><i>40</i><i>50</i></div>
<div class="tr"></div><div class="cap" style="top:567px"></div><div class="cl"></div><div class="mt"><b></b><b></b></div>
<div class="vd"><span>0.0</span><span>-∞</span></div><div class="ic">⇕</div><div class="dy">dyn</div><div class="ff">▸▸</div><div class="nm">FX 2</div><div class="cb2" style="background:#2a4a18"></div></div>

<!-- 21 FX 3 -->
<div class="s" style="left:1223px"><div class="up"></div><div class="cb" style="background:#2a4a18"></div>
<div class="sec" style="top:57px"><div class="h">INSERTS A-E</div><p class="a">Trim</p><p></p><p></p><p></p><p></p></div>
<div class="sec" style="top:133px"><div class="h">INSERTS F-J</div><p></p><p></p><p></p><p></p><p></p></div>
<div class="sec" style="top:209px"><div class="h">SENDS A-E</div><p class="a m">Reverb</p><p></p><p></p><p></p><p></p></div>
<div class="sec" style="top:285px"><div class="h">SENDS F-J</div><p></p><p></p><p></p><p></p><p></p></div>
<div class="sec" style="top:361px"><div class="h">I / O</div></div><div class="io" style="top:372px">SFX Bus</div><div class="io" style="top:385px">Master Bus</div>
<div class="sec" style="top:397px"><div class="h">AUTO</div></div><div class="io ar" style="top:407px">auto read</div>
<div class="lo"></div><div class="gb"></div><div class="ng">no group</div><div class="kn kl"></div><div class="kn kr"></div>
<div class="pv"><span>◂100</span><span>|</span><span>100▸</span></div><div class="bt S">S</div><div class="bt M">M</div>
<div class="sl"><i>12</i><i>6</i><i>0</i><i>5</i><i>10</i><i>15</i><i>20</i><i>30</i><i>40</i><i>60</i><i>∞</i></div><div class="sr"><i>0</i><i>0</i><i>5</i><i>10</i><i>15</i><i>20</i><i>25</i><i>30</i><i>35</i><i>40</i><i>50</i></div>
<div class="tr"></div><div class="cap" style="top:567px"></div><div class="cl"></div><div class="mt"><b></b><b></b></div>
<div class="vd"><span>0.0</span><span>-∞</span></div><div class="ic">⇕</div><div class="dy">dyn</div><div class="ff">▸▸</div><div class="nm">FX 3</div><div class="cb2" style="background:#2a4a18"></div></div>

<!-- 22 FX 4 -->
<div class="s" style="left:1279px"><div class="up"></div><div class="cb" style="background:#2a4a18"></div>
<div class="sec" style="top:57px"><div class="h">INSERTS A-E</div><p class="a">Trim</p><p></p><p></p><p></p><p></p></div>
<div class="sec" style="top:133px"><div class="h">INSERTS F-J</div><p></p><p></p><p></p><p></p><p></p></div>
<div class="sec" style="top:209px"><div class="h">SENDS A-E</div><p class="a m">Reverb</p><p></p><p></p><p class="i">Bus 75-76</p><p></p></div>
<div class="sec" style="top:285px"><div class="h">SENDS F-J</div><p></p><p></p><p></p><p></p><p></p></div>
<div class="sec" style="top:361px"><div class="h">I / O</div></div><div class="io" style="top:372px">SFX Bus</div><div class="io" style="top:385px">Master Bus</div>
<div class="sec" style="top:397px"><div class="h">AUTO</div></div><div class="io ar" style="top:407px">auto read</div>
<div class="lo"></div><div class="gb"></div><div class="ng">no group</div><div class="kn kl"></div><div class="kn kr"></div>
<div class="pv"><span>◂100</span><span>|</span><span>100▸</span></div><div class="bt S">S</div><div class="bt M">M</div>
<div class="sl"><i>12</i><i>6</i><i>0</i><i>5</i><i>10</i><i>15</i><i>20</i><i>30</i><i>40</i><i>60</i><i>∞</i></div><div class="sr"><i>0</i><i>0</i><i>5</i><i>10</i><i>15</i><i>20</i><i>25</i><i>30</i><i>35</i><i>40</i><i>50</i></div>
<div class="tr"></div><div class="cap" style="top:567px"></div><div class="cl"></div><div class="mt"><b></b><b></b></div>
<div class="vd"><span>0.0</span><span>-∞</span></div><div class="ic">⇕</div><div class="dy">dyn</div><div class="ff">▸▸</div><div class="nm">FX 4</div><div class="cb2" style="background:#2a4a18"></div></div>

<!-- 23 CROWD 1 -->
<div class="s" style="left:1335px"><div class="up"></div><div class="cb" style="background:#1a3a6a"></div>
<div class="sec" style="top:57px"><div class="h">INSERTS A-E</div><p></p><p></p><p></p><p></p><p></p></div>
<div class="sec" style="top:133px"><div class="h">INSERTS F-J</div><p></p><p></p><p></p><p></p><p></p></div>
<div class="sec" style="top:209px"><div class="h">SENDS A-E</div><p></p><p></p><p></p><p></p><p></p></div>
<div class="sec" style="top:285px"><div class="h">SENDS F-J</div><p></p><p></p><p></p><p></p><p></p></div>
<div class="sec" style="top:361px"><div class="h">I / O</div></div><div class="io" style="top:372px">no input</div><div class="io" style="top:385px">Crowd Bus</div>
<div class="sec" style="top:397px"><div class="h">AUTO</div></div><div class="io ar" style="top:407px">auto read</div>
<div class="lo"></div><div class="gb"></div><div class="ng">no group</div><div class="kn kl"></div><div class="kn kr"></div>
<div class="pv"><span>◂100</span><span>|</span><span>100▸</span></div><div class="bt S">S</div><div class="bt M">M</div>
<div class="sl"><i>12</i><i>6</i><i>0</i><i>5</i><i>10</i><i>15</i><i>20</i><i>30</i><i>40</i><i>60</i><i>∞</i></div><div class="sr"><i>0</i><i>0</i><i>5</i><i>10</i><i>15</i><i>20</i><i>25</i><i>30</i><i>35</i><i>40</i><i>50</i></div>
<div class="tr"></div><div class="cap" style="top:567px"></div><div class="cl"></div><div class="mt"><b></b><b></b></div>
<div class="vd"><span>0.0</span><span>-∞</span></div><div class="ic">⇕</div><div class="dy">dyn</div><div class="ff">▸▸</div><div class="nm">CROWD 1</div><div class="cb2" style="background:#1a3a6a"></div></div>
</body></html>
